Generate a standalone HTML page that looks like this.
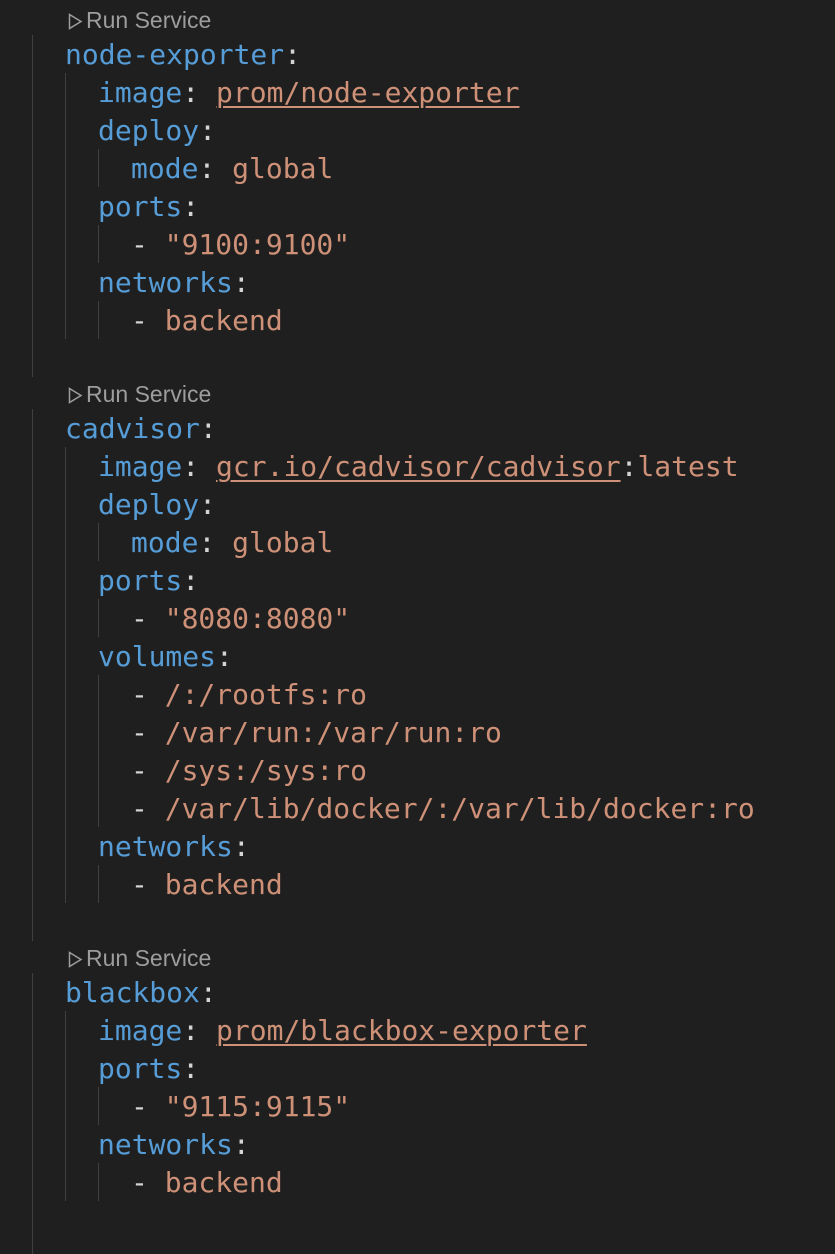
<!DOCTYPE html>
<html><head><meta charset="utf-8"><style>
html,body{margin:0;padding:0;background:#1f1f1f;width:835px;height:1254px;overflow:hidden;position:relative}
.l{position:absolute;height:38px;line-height:38px;font-family:"DejaVu Sans Mono","Liberation Mono",monospace;font-size:28px;white-space:pre;color:#d4d4d4;margin-top:1px}
.k{color:#569cd6}.s{color:#ce9178}.u{color:#ce9178;text-decoration:underline;text-decoration-thickness:2px;text-underline-offset:4px}
.g{position:absolute;width:1px;background:#404040}
.c{position:absolute;height:32px;line-height:32px;font-family:"Liberation Sans","DejaVu Sans",sans-serif;font-size:23px;color:#9d9d9d;left:68px}
.c svg{vertical-align:-2px;margin-right:3px}
</style></head><body>
<div class="g" style="left:32px;top:35px;height:342px"></div>
<div class="g" style="left:32px;top:409px;height:532px"></div>
<div class="g" style="left:32px;top:973px;height:281px"></div>
<div class="g" style="left:65px;top:73px;height:266px"></div>
<div class="g" style="left:65px;top:447px;height:456px"></div>
<div class="g" style="left:65px;top:1011px;height:190px"></div>
<div class="g" style="left:98px;top:149px;height:38px"></div>
<div class="g" style="left:98px;top:225px;height:38px"></div>
<div class="g" style="left:98px;top:301px;height:38px"></div>
<div class="g" style="left:98px;top:523px;height:38px"></div>
<div class="g" style="left:98px;top:599px;height:38px"></div>
<div class="g" style="left:98px;top:675px;height:152px"></div>
<div class="g" style="left:98px;top:865px;height:38px"></div>
<div class="g" style="left:98px;top:1087px;height:38px"></div>
<div class="g" style="left:98px;top:1163px;height:38px"></div>

<div class="c" style="top:4px"><svg width="15" height="17" viewBox="0 0 15 17"><path d="M1.5 1.5 L13 8.5 L1.5 15.5 Z" fill="none" stroke="#9d9d9d" stroke-width="1.5"/></svg>Run Service</div>
<div class="l" style="left:65px;top:35px"><span class="k">node-exporter</span>:</div>
<div class="l" style="left:98px;top:73px"><span class="k">image</span>: <span class="u">prom/node-exporter</span></div>
<div class="l" style="left:98px;top:111px"><span class="k">deploy</span>:</div>
<div class="l" style="left:131px;top:149px"><span class="k">mode</span>: <span class="s">global</span></div>
<div class="l" style="left:98px;top:187px"><span class="k">ports</span>:</div>
<div class="l" style="left:131px;top:225px">- <span class="s">"9100:9100"</span></div>
<div class="l" style="left:98px;top:263px"><span class="k">networks</span>:</div>
<div class="l" style="left:131px;top:301px">- <span class="s">backend</span></div>

<div class="c" style="top:378px"><svg width="15" height="17" viewBox="0 0 15 17"><path d="M1.5 1.5 L13 8.5 L1.5 15.5 Z" fill="none" stroke="#9d9d9d" stroke-width="1.5"/></svg>Run Service</div>
<div class="l" style="left:65px;top:409px"><span class="k">cadvisor</span>:</div>
<div class="l" style="left:98px;top:447px"><span class="k">image</span>: <span class="u">gcr.io/cadvisor/cadvisor</span>:<span class="s">latest</span></div>
<div class="l" style="left:98px;top:485px"><span class="k">deploy</span>:</div>
<div class="l" style="left:131px;top:523px"><span class="k">mode</span>: <span class="s">global</span></div>
<div class="l" style="left:98px;top:561px"><span class="k">ports</span>:</div>
<div class="l" style="left:131px;top:599px">- <span class="s">"8080:8080"</span></div>
<div class="l" style="left:98px;top:637px"><span class="k">volumes</span>:</div>
<div class="l" style="left:131px;top:675px">- <span class="s">/:/rootfs:ro</span></div>
<div class="l" style="left:131px;top:713px">- <span class="s">/var/run:/var/run:ro</span></div>
<div class="l" style="left:131px;top:751px">- <span class="s">/sys:/sys:ro</span></div>
<div class="l" style="left:131px;top:789px">- <span class="s">/var/lib/docker/:/var/lib/docker:ro</span></div>
<div class="l" style="left:98px;top:827px"><span class="k">networks</span>:</div>
<div class="l" style="left:131px;top:865px">- <span class="s">backend</span></div>

<div class="c" style="top:942px"><svg width="15" height="17" viewBox="0 0 15 17"><path d="M1.5 1.5 L13 8.5 L1.5 15.5 Z" fill="none" stroke="#9d9d9d" stroke-width="1.5"/></svg>Run Service</div>
<div class="l" style="left:65px;top:973px"><span class="k">blackbox</span>:</div>
<div class="l" style="left:98px;top:1011px"><span class="k">image</span>: <span class="u">prom/blackbox-exporter</span></div>
<div class="l" style="left:98px;top:1049px"><span class="k">ports</span>:</div>
<div class="l" style="left:131px;top:1087px">- <span class="s">"9115:9115"</span></div>
<div class="l" style="left:98px;top:1125px"><span class="k">networks</span>:</div>
<div class="l" style="left:131px;top:1163px">- <span class="s">backend</span></div>
</body></html>
